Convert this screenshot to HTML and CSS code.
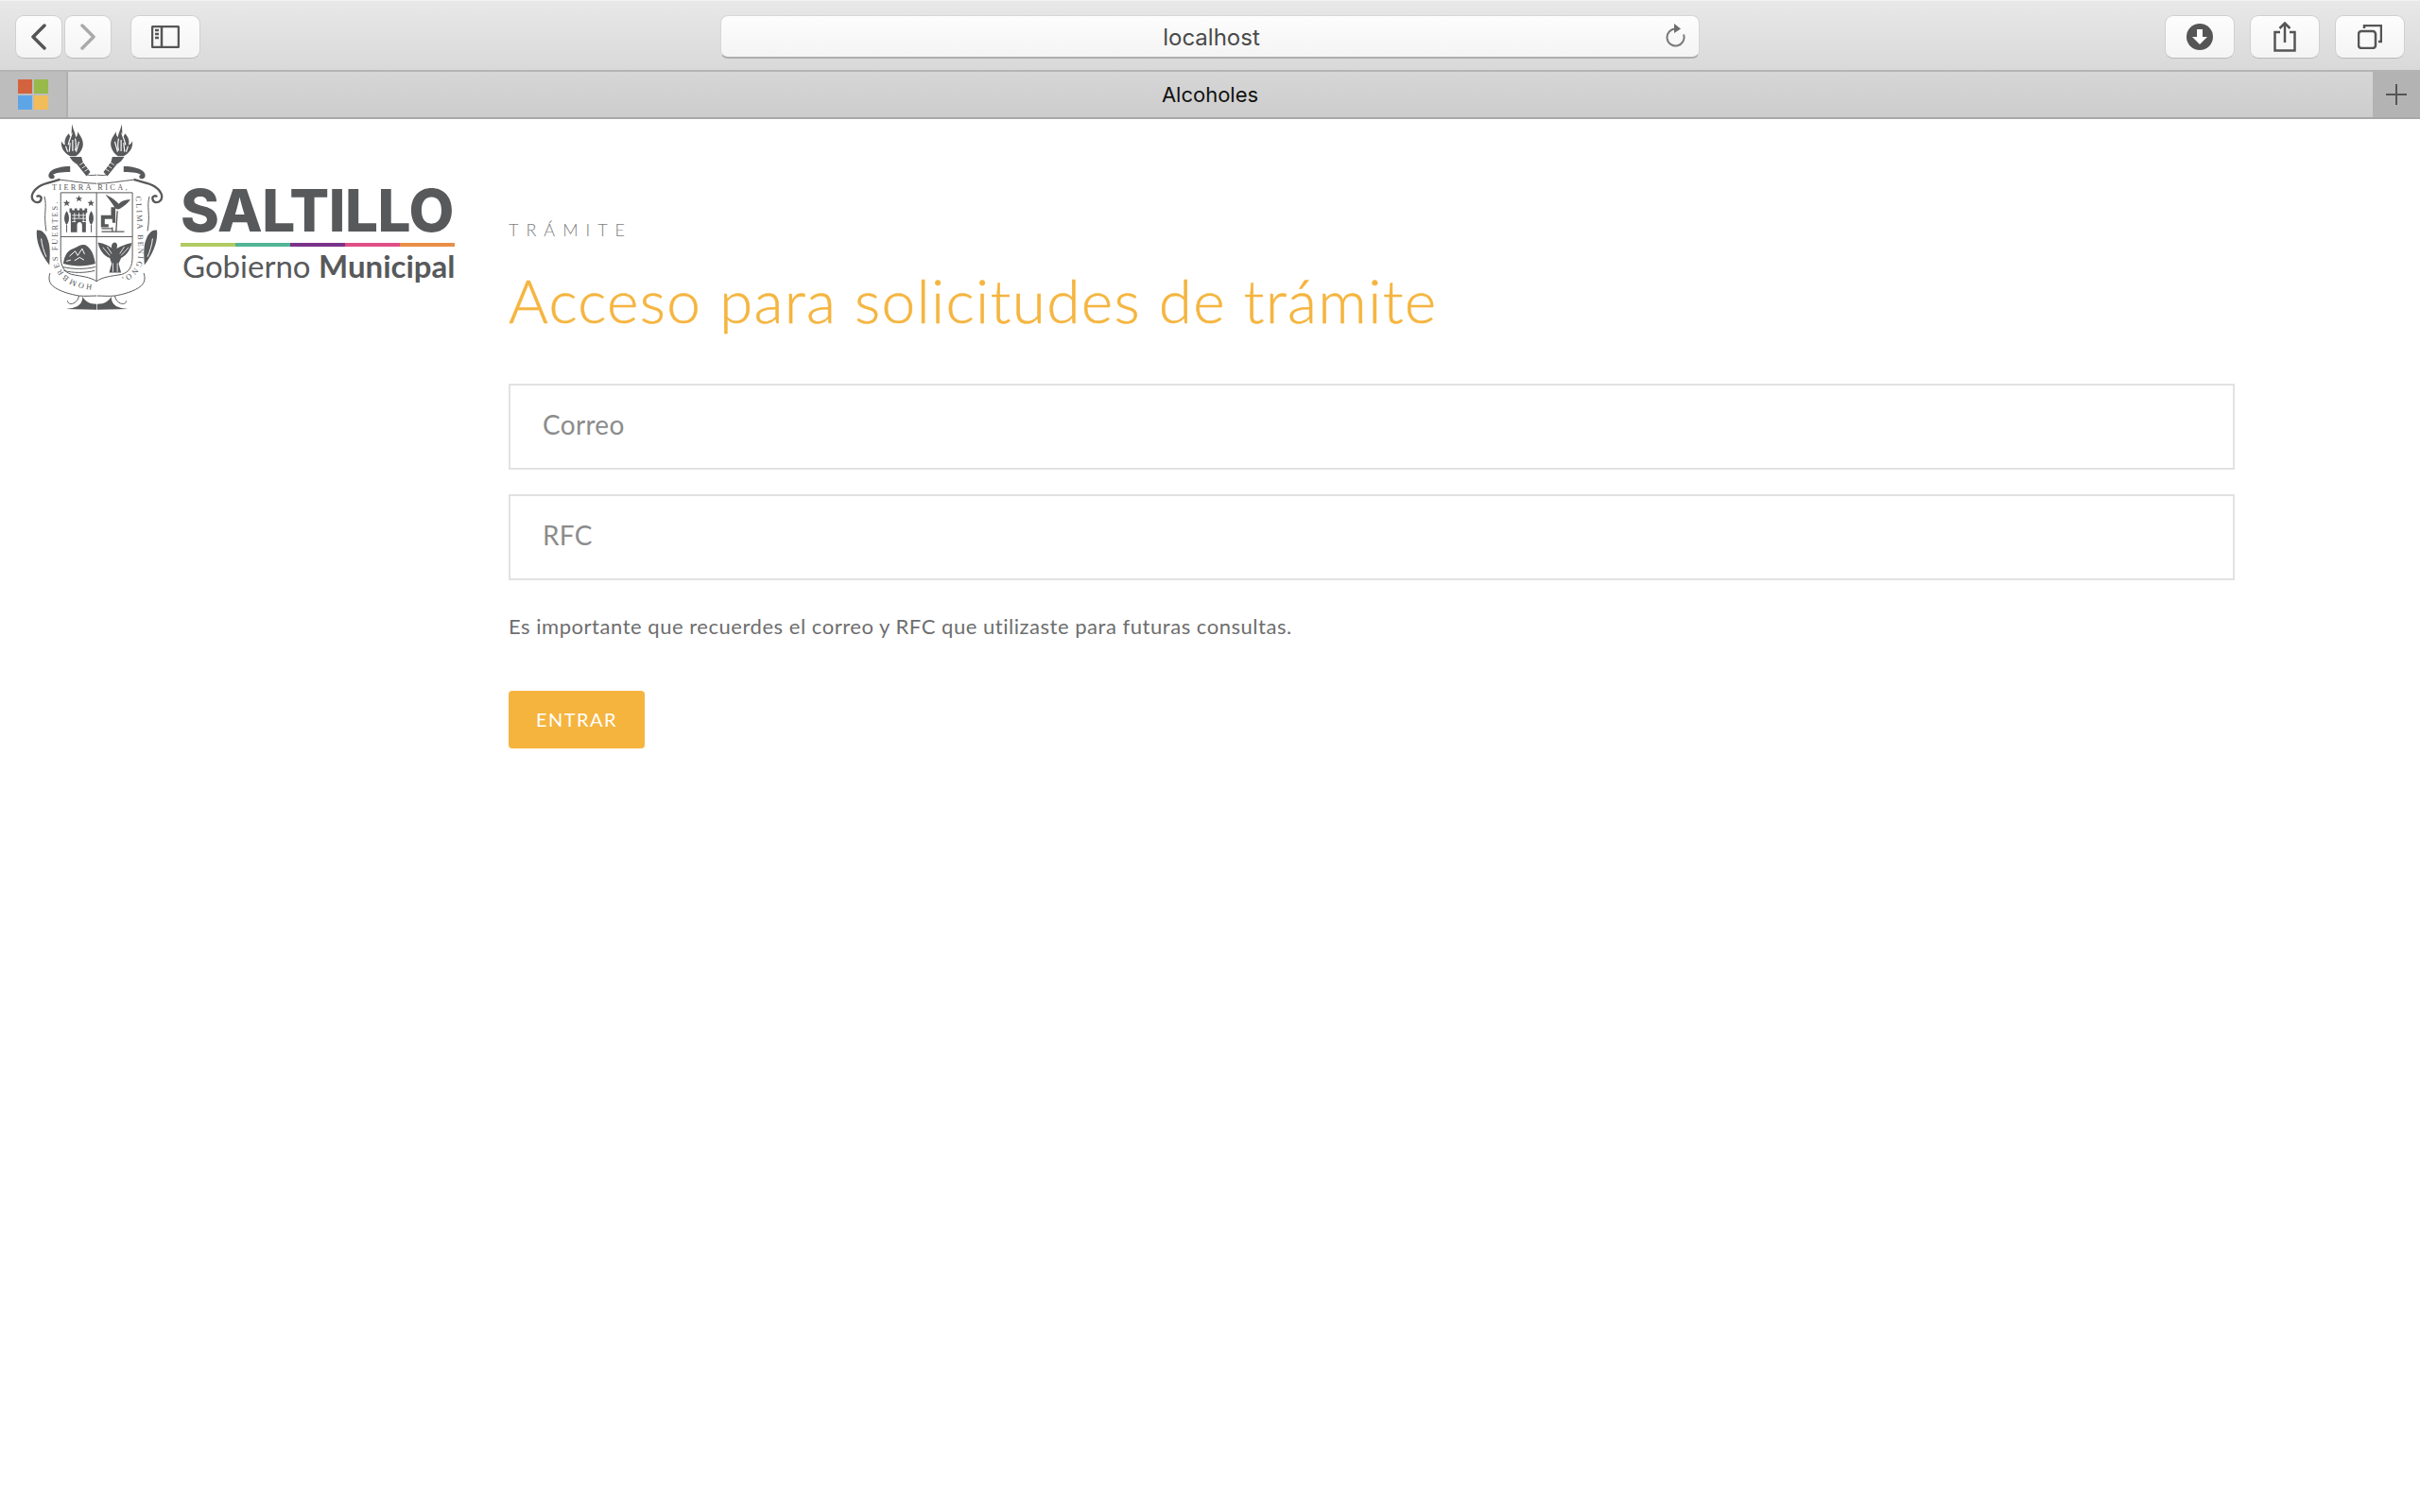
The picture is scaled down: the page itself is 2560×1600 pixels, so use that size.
FILE: index.html
```html
<!DOCTYPE html>
<html lang="es">
<head>
    <meta charset="UTF-8">
    <meta name="viewport" content="width=device-width, initial-scale=1.0">
    <title>Alcoholes</title>
    <link rel="stylesheet" href="styles.css">
</head>
<body>
    <header class="toolbar">
        <div class="nav-group">
            <button class="tool-btn nav-btn" type="button" aria-label="Atrás">
                <svg width="18" height="28" viewBox="0 0 18 28"><path d="M15 2 3 14l12 12" class="icon-line"/></svg>
            </button>
            <button class="tool-btn nav-btn" type="button" aria-label="Adelante">
                <svg width="18" height="28" viewBox="0 0 18 28"><path d="m3 2 12 12L3 26" class="icon-line icon-dim"/></svg>
            </button>
        </div>
        <button class="tool-btn wide-btn sidebar-btn" type="button" aria-label="Barra lateral">
            <svg width="30" height="24" viewBox="0 0 30 24">
                <rect x="1" y="1" width="28" height="22" rx="1.5" class="icon-thin"/>
                <path d="M11 1v22" class="icon-thin"/>
                <path d="M4 5h4M4 9h4M4 13h4" class="icon-thin"/>
            </svg>
        </button>
        <div class="address">
            <span>localhost</span>
            <svg class="reload" width="24" height="28" viewBox="0 0 24 28">
                <path d="M12.5 6.5a9 9 0 1 0 8.5 6" class="icon-reload"/>
                <path d="M11 1l7 5.5L11 11z" fill="#6e6e6e"/>
            </svg>
        </div>
        <button class="tool-btn wide-btn" type="button" aria-label="Descargas">
            <svg width="28" height="28" viewBox="0 0 28 28">
                <circle cx="14" cy="14" r="14" fill="#555"/>
                <path d="M11 6h6v8h5l-8 8-8-8h5z" fill="#fff"/>
            </svg>
        </button>
        <button class="tool-btn wide-btn" type="button" aria-label="Compartir">
            <svg width="24" height="32" viewBox="0 0 24 32">
                <path d="M7 11H1.500v19.500h21V11H17" class="icon-thin"/>
                <path d="M12 22V2M6.500 7 12 1.500 17.500 7" class="icon-thin"/>
            </svg>
        </button>
        <button class="tool-btn wide-btn" type="button" aria-label="Pestañas">
            <svg width="26" height="26" viewBox="0 0 26 26">
                <rect x="1" y="7" width="18" height="18" rx="3" class="icon-thin"/>
                <path d="M7 4V1h18v17h-3" class="icon-thin"/>
            </svg>
        </button>
    </header>

    <nav class="tabbar">
        <div class="tab-favicon">
            <div class="favicon-grid">
                <span class="fav-red"></span>
                <span class="fav-green"></span>
                <span class="fav-blue"></span>
                <span class="fav-yellow"></span>
            </div>
        </div>
        <div class="tab-title">Alcoholes</div>
        <div class="tab-add">
            <svg width="22" height="22" viewBox="0 0 22 22"><path d="M11 0v22M0 11h22" stroke="#555" stroke-width="2"/></svg>
        </div>
    </nav>

    <div class="page">
        <aside class="logo">
            <svg class="crest" viewBox="90 10 440 610" role="img" aria-label="Escudo de Saltillo">
                <defs>
                    <g id="crest-half">
                        <!-- flame -->
                        <path d="M228 20C232 40 238 46 240 62 246 56 246 50 246 44 254 58 266 70 262 92 258 106 250 116 240 122L222 122C204 112 192 98 194 74 198 82 202 86 206 86 202 70 210 58 218 50 220 56 222 60 224 60 228 46 226 34 228 20z" fill="#58595b"/>
                        <path d="M228 48c-4 14-10 26-12 38M238 66c3 14 4 24 0 38M222 80l-3 28M250 76l-9 32M208 90l6 18M230 70v36" stroke="#fff" stroke-width="3.500" fill="none"/>
                        <!-- torch -->
                        <path d="M220 124h38l4 16-18 8-14-10z" fill="#58595b"/>
                        <path d="M244 148l16-10 26 34-12 14z" fill="#58595b"/>
                        <path d="M252 150l14-9M260 160l14-9M268 170l12-8" stroke="#fff" stroke-width="2.500"/>
                        <!-- top scroll -->
                        <path d="M222 154c-26 0-52 6-62 16-10 10-8 22 2 24 8 2 14-6 8-12-4-4-8 0-6 2 8-10 30-12 58-12z" fill="#58595b"/>
                        <path d="M270 176c10 10 22 6 36 6" class="crest-line"/>
                        <!-- frame -->
                        <path d="M190 196c-22 8-48 10-66 22-22 14-30 34-18 46 8 8 22 6 24-6 2-8-10-14-14-6" class="crest-thick"/>
                        <path d="M140 250c10 34-4 52 6 110" class="crest-line"/>
                        <path d="M190 197c40 4 80 12 116 12" class="crest-line"/>
                        <!-- side ornament -->
                        <path d="M116 358c-4 34 14 78 40 110 2-36 4-62-8-88-6-14-20-26-32-22z" fill="#58595b"/>
                        <path d="M130 384c2 20 8 40 16 58" stroke="#fff" stroke-width="3" fill="none"/>
                        <!-- bottom -->
                        <path d="M158 494c-6 18-2 30 8 40 20 18 60 28 84 32-2 14-10 20-18 24-10 4-18 0-18-8" class="crest-line"/>
                        <path d="M208 608c30-4 52-8 54-40 6 14 20 24 44 24v18z" fill="#58595b"/>
                        <path d="M250 566c20 2 38 0 56 0" class="crest-line"/>
                    </g>
                    <path id="arc-top" d="M164 230H460"/>
                    <path id="arc-right" d="M430 250C436 320 438 400 438 440 438 490 380 526 300 530"/>
                    <path id="arc-left" d="M292 530C235 526 184 500 182 440L182 236"/>
                </defs>

                <use href="#crest-half"/>
                <use href="#crest-half" transform="translate(614 0) scale(-1 1)"/>

                <text class="crest-text crest-text-top"><textPath href="#arc-top">TIERRA&#160;RICA,</textPath></text>
                <text class="crest-text"><textPath href="#arc-right">CLIMA BENIGNO,</textPath></text>
                <text class="crest-text"><textPath href="#arc-left">HOMBRES FUERTES.</textPath></text>

                <!-- shield -->
                <path d="M192 238H420V440c0 34-10 50-34 58-36 6-62 8-80 22-20-14-48-16-80-22-24-8-34-26-34-58z" class="crest-line"/>
                <path d="M306 238V520M192 378H420" class="crest-line"/>

                <!-- stars -->
                <path d="M211 260l3 8h8l-6 5 2 8-7-5-7 5 2-8-6-5h8zM250 246l3 8h8l-6 5 2 8-7-5-7 5 2-8-6-5h8zM288 260l3 8h8l-6 5 2 8-7-5-7 5 2-8-6-5h8z" fill="#58595b"/>
                <!-- castle -->
                <path d="M224 364v-62h-4v-14h8v6h8v-6h8v6h8v-6h8v6h8v-6h8v14h-4v62h-12v-22c0-14-16-14-16 0v22z" fill="#58595b"/>
                <path d="M228 310h44M228 320h44M228 330h12M260 330h12M236 302v30M250 302v16M264 302v30" stroke="#fff" stroke-width="2.500"/>
                <!-- trees -->
                <path d="M211 296c10 14 10 34 0 44-10-10-10-30 0-44zM289 296c10 14 10 34 0 44-10-10-10-30 0-44z" fill="#58595b"/>
                <path d="M211 340v24M289 340v24" stroke="#58595b" stroke-width="3"/>
                <!-- loom and bird -->
                <path d="M334 244c20 10 32 18 42 30 6-8 20-14 38-14-10 12-20 20-32 28-6 4-14 4-18-2-8-14-20-28-30-42z" fill="#58595b"/>
                <path d="M320 310h32v-26h14v50h-10v-12h-24v16h12v10h-24z" fill="#58595b"/>
                <path d="M372 296l-4 66h-12v-14M322 352h34M322 362h72" stroke="#58595b" stroke-width="4" fill="none"/>
                <!-- mountain -->
                <path d="M200 464c4-30 16-44 36-50 16-8 28-16 40-6 12 8 22 26 26 56-30 10-70 10-102 0z" fill="#58595b"/>
                <path d="M220 440l18-16 8 14 14-22 8 18M236 454l16-10 14 8M210 456l14-4" stroke="#fff" stroke-width="3" fill="none"/>
                <path d="M198 474c30 8 74 8 104 0M202 486c30 8 66 8 98 0" class="crest-line"/>
                <!-- eagle -->
                <path d="M310 396c20 4 34 10 44 18-2-8 2-18 10-18 10 2 8 14 6 20 14-8 30-14 48-18-4 20-16 40-34 48l-8 18 8 28h-38l8-28-6-18c-20-8-34-28-38-50z" fill="#58595b"/>
                <path d="M326 412l22 26M340 410l14 22M408 412l-24 26M394 410l-14 22M358 462v28M372 462v28" stroke="#fff" stroke-width="2.500"/>
            </svg>
            <div class="wordmark">
                <div class="wordmark-name">SALTILLO</div>
                <div class="wordmark-rule">
                    <span class="rule-lime"></span>
                    <span class="rule-teal"></span>
                    <span class="rule-purple"></span>
                    <span class="rule-pink"></span>
                    <span class="rule-orange"></span>
                </div>
                <div class="wordmark-sub">Gobierno <strong>Municipal</strong></div>
            </div>
        </aside>

        <main class="content">
            <p class="eyebrow">TRÁMITE</p>
            <h1 class="title">Acceso para solicitudes de trámite</h1>
            <form class="access-form">
                <input class="field" type="text" placeholder="Correo">
                <input class="field" type="text" placeholder="RFC">
                <p class="hint">Es importante que recuerdes el correo y RFC que utilizaste para futuras consultas.</p>
                <button class="submit" type="button">ENTRAR</button>
            </form>
        </main>
    </div>
</body>
</html>
```

FILE: styles.css
```css
body {
    margin: 0;
    min-height: 1600px;
    background: #fff;
    font-family: "Lato", "Noto Sans", sans-serif;
    color: #6b6b6b;
}

/* browser chrome */
.toolbar {
    display: flex;
    align-items: flex-start;
    height: 76px;
    box-sizing: border-box;
    padding: 15px 16px 0;
    gap: 16px;
    background: linear-gradient(#e8e8e8, #d9d9d9);
    border-top: 1px solid #f2f2f2;
    border-bottom: 2px solid #b4b4b4;
}
.tool-btn {
    display: flex;
    align-items: center;
    justify-content: center;
    height: 46px;
    padding: 0;
    background: linear-gradient(#fdfdfd, #f4f4f4);
    border: 1px solid #d0d0d0;
    border-bottom-color: #b9b9b9;
    border-radius: 9px;
}
.nav-group {
    display: flex;
    gap: 2px;
}
.nav-btn {
    width: 50px;
}
.wide-btn {
    width: 74px;
}
.sidebar-btn {
    margin-left: 4px;
}
.icon-line {
    fill: none;
    stroke: #555;
    stroke-width: 3.500;
    stroke-linecap: round;
    stroke-linejoin: round;
}
.icon-dim {
    stroke: #aaa;
}
.icon-thin {
    fill: none;
    stroke: #555;
    stroke-width: 2.500;
}
.icon-reload {
    fill: none;
    stroke: #7a7a7a;
    stroke-width: 2;
}
.address {
    position: relative;
    flex: none;
    width: 1036px;
    height: 46px;
    box-sizing: border-box;
    margin-left: 534px;
    margin-right: 476px;
    display: flex;
    align-items: center;
    justify-content: center;
    background: linear-gradient(#fdfdfd, #f4f4f4);
    border: 1px solid #d6d6d6;
    border-bottom: 2px solid #adadad;
    border-radius: 8px;
    font-family: "Inter", sans-serif;
    font-size: 24px;
    color: #4a4a4a;
}
.address span {
    margin: 1px 0 0 3px;
}
.reload {
    position: absolute;
    right: 13px;
    top: 7px;
}

.tabbar {
    display: flex;
    height: 50px;
    box-sizing: border-box;
    background: linear-gradient(#d6d6d6, #cdcdcd);
    border-bottom: 2px solid #a8a8a8;
}
.tab-favicon {
    width: 72px;
    box-sizing: border-box;
    padding: 8px 0 0 19px;
    background: #bdbdbd;
    border-right: 2px solid #b0b0b0;
}
.favicon-grid {
    display: grid;
    grid-template-columns: 15px 15px;
    grid-auto-rows: 15px;
    gap: 2px;
}
.fav-red { background: #d3633f; }
.fav-green { background: #97ba4a; }
.fav-blue { background: #5ea5e8; }
.fav-yellow { background: #f1bd5b; }
.tab-title {
    flex: 1;
    padding-right: 22px;
    text-align: center;
    font-family: "Inter", sans-serif;
    font-size: 22px;
    line-height: 48px;
    color: #111;
}
.tab-add {
    display: flex;
    align-items: center;
    justify-content: center;
    width: 50px;
    background: #b3b3b3;
}

/* page */
.page {
    display: grid;
    grid-template-columns: 538px 1826px;
}
.logo {
    display: flex;
    align-items: flex-start;
    padding: 2px 0 0 30px;
}
.crest {
    flex: none;
    width: 147px;
    height: 203px;
}
.crest-line {
    fill: none;
    stroke: #58595b;
    stroke-width: 3;
}
.crest-thick {
    fill: none;
    stroke: #58595b;
    stroke-width: 7;
}
.crest-text {
    font-family: "Liberation Serif", serif;
    font-size: 25px;
    letter-spacing: 6px;
    fill: #58595b;
}
.crest-text-top {
    letter-spacing: 7px;
}
.wordmark {
    width: 290px;
    margin: 61px 0 0 14px;
    color: #58595b;
}
.wordmark-name {
    font-family: "Inter", sans-serif;
    font-weight: 800;
    font-size: 62px;
    line-height: 68px;
    letter-spacing: -0.500px;
}
.wordmark-rule {
    display: flex;
    height: 4px;
}
.wordmark-rule span {
    flex: 1;
}
.rule-lime { background: #b0cb62; }
.rule-teal { background: #52b495; }
.rule-purple { background: #7b3389; }
.rule-pink { background: #df4e85; }
.rule-orange { background: #e98f45; }
.wordmark-sub {
    margin: 1px 0 0 2px;
    font-family: "Lato", sans-serif;
    font-size: 33px;
    line-height: 38px;
    white-space: nowrap;
}
.wordmark-sub strong {
    font-weight: 700;
}

.content {
    padding-top: 106px;
}
.eyebrow {
    margin: 0;
    font-size: 18px;
    font-weight: 300;
    line-height: 22px;
    letter-spacing: 8px;
    color: #7d7d7d;
}
.title {
    margin: 26px 0 50px;
    font-size: 64px;
    line-height: 76px;
    font-weight: 300;
    letter-spacing: 1.300px;
    -webkit-text-stroke: 0.5px #f5b540;
    color: #f5b540;
}
.access-form {
    display: flex;
    flex-direction: column;
    align-items: flex-start;
}
.field {
    width: 100%;
    height: 91px;
    box-sizing: border-box;
    margin-bottom: 26px;
    padding: 0 34px 5px;
    border: 2px solid #e2e2e2;
    border-radius: 0;
    font-family: "Lato", sans-serif;
    font-size: 28px;
    letter-spacing: 0.300px;
    outline: none;
}
.field::placeholder {
    color: #8c8c8c;
    opacity: 1;
}
.hint {
    margin: 8px 0 53px;
    font-size: 22px;
    line-height: 30px;
    letter-spacing: 0.530px;
    color: #6e6e6e;
}
.submit {
    width: 144px;
    height: 61px;
    padding: 0 0 2px;
    border: none;
    border-radius: 4px;
    background: #f5b43e;
    color: #fff;
    font-family: "Lato", sans-serif;
    font-size: 20px;
    letter-spacing: 1.500px;
}
```
